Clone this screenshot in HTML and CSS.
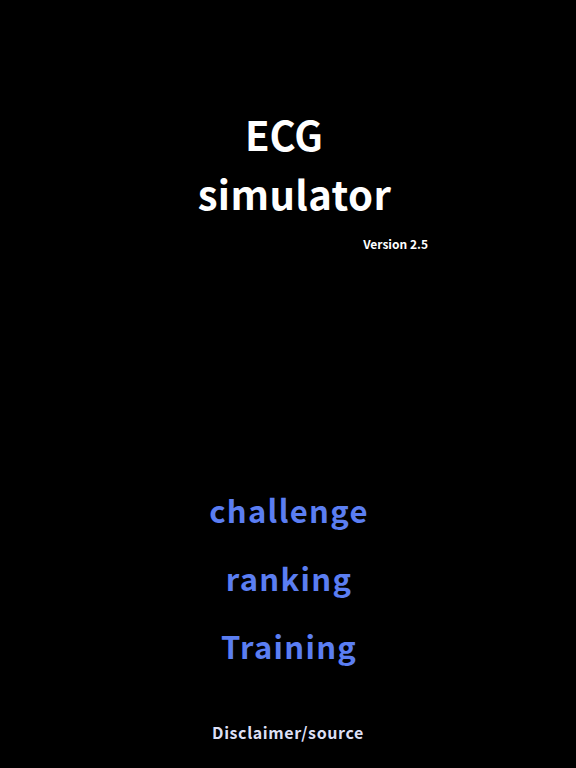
FILE: index.html
```html
<!DOCTYPE html>
<html>
<head>
<meta charset="utf-8">
<link rel="stylesheet" href="styles.css">
</head>
<body>
<div class="screen">
  <header class="title">
    <div class="title-ecg">ECG</div>
    <div class="title-sim">simulator</div>
    <div class="version">Version 2.5</div>
  </header>
  <nav class="menu">
    <div class="menu-item">challenge</div>
    <div class="menu-item">ranking</div>
    <div class="menu-item">Training</div>
  </nav>
  <footer class="disclaimer">Disclaimer/source</footer>
</div>
</body>
</html>
```
FILE: styles.css
```css
html, body {
  margin: 0;
  padding: 0;
  background: #000;
}
.screen {
  width: 576px;
  height: 768px;
  display: flex;
  flex-direction: column;
  font-family: "Noto Sans CJK JP", "Noto Sans", sans-serif;
  font-weight: 700;
  color: #fff;
}
.title {
  display: flex;
  flex-direction: column;
  padding-top: 105px;
}
.title-ecg {
  font-size: 40px;
  line-height: 59px;
  text-align: center;
  margin-left: -8px;
}
.title-sim {
  font-size: 40px;
  line-height: 58px;
  text-align: center;
  margin-left: 13px;
  letter-spacing: 0.4px;
}
.version {
  font-size: 12px;
  line-height: 18px;
  align-self: flex-end;
  margin-right: 148px;
  margin-top: 13px;
}
.menu {
  display: flex;
  flex-direction: column;
  align-items: center;
  margin-top: 235px;
  gap: 24px;
  color: #5b7ef2;
}
.menu-item {
  font-size: 31px;
  line-height: 44px;
  letter-spacing: 1.3px;
  margin-left: 2px;
}
.disclaimer {
  margin-top: 52px;
  text-align: center;
  font-size: 16px;
  line-height: 24px;
  letter-spacing: 0.6px;
  color: #dcdff4;
}
```
